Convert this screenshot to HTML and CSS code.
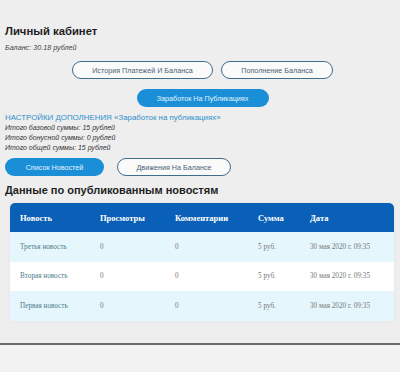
FILE: index.html
```html
<!DOCTYPE html>
<html lang="ru">
<head>
    <meta charset="UTF-8">
    <meta name="viewport" content="width=device-width, initial-scale=1.0">
    <title>Личный кабинет</title>
    <link rel="stylesheet" href="styles.css">
</head>
<body>
    <div class="container">
        <h1>Личный кабинет</h1>
        <p class="balance">Баланс: 30.18 рублей</p>

        <div class="btn-row center">
            <a class="btn outline w-history" href="#">История Платежей И Баланса</a>
            <a class="btn outline w-topup" href="#">Пополнение Баланса</a>
        </div>
        <div class="btn-row center second">
            <a class="btn filled w-earn" href="#">Заработок На Публикациях</a>
        </div>

        <div class="settings">
            <div class="settings-title">НАСТРОЙКИ ДОПОЛНЕНИЯ «Заработок на публикациях»</div>
            <div class="note">Итого базовой суммы: 15 рублей</div>
            <div class="note">Итого бонусной суммы: 0 рублей</div>
            <div class="note">Итого общей суммы: 15 рублей</div>
        </div>

        <div class="btn-row left">
            <a class="btn filled w-news" href="#">Список Новостей</a>
            <a class="btn outline w-moves" href="#">Движения На Балансе</a>
        </div>

        <h2>Данные по опубликованным новостям</h2>

        <table class="news-table">
            <thead>
                <tr>
                    <th class="c1">Новость</th>
                    <th class="c2">Просмотры</th>
                    <th class="c3">Комментарии</th>
                    <th class="c4">Сумма</th>
                    <th>Дата</th>
                </tr>
            </thead>
            <tbody>
                <tr>
                    <td class="title">Третья новость</td>
                    <td>0</td>
                    <td>0</td>
                    <td>5 руб.</td>
                    <td>30 мая 2020 г. 09:35</td>
                </tr>
                <tr>
                    <td class="title">Вторая новость</td>
                    <td>0</td>
                    <td>0</td>
                    <td>5 руб.</td>
                    <td>30 мая 2020 г. 09:35</td>
                </tr>
                <tr>
                    <td class="title">Первая новость</td>
                    <td>0</td>
                    <td>0</td>
                    <td>5 руб.</td>
                    <td>30 мая 2020 г. 09:35</td>
                </tr>
            </tbody>
        </table>
    </div>
    <div class="footer"></div>
</body>
</html>
```

FILE: styles.css
```css
body {
    font-family: "Liberation Sans", Arial, sans-serif;
    margin: 0;
    padding: 0;
    background-color: #eeeeee;
    color: #222;
}

.container {
    padding: 24px 0 0 5px;
}

h1 {
    font-size: 11.3px;
    font-weight: bold;
    margin: 0;
    line-height: 15px;
    color: #1e1e1e;
}

.balance {
    font-size: 7.2px;
    font-style: italic;
    color: #444;
    margin: 4px 0 0;
    line-height: 10px;
}

.btn-row {
    display: flex;
    gap: 8px;
}

.btn-row.center {
    justify-content: center;
    margin-top: 8px;
}

.btn-row.second {
    margin-top: 10px;
}

.btn-row.left {
    gap: 13px;
    margin-top: 5px;
}

.btn {
    display: flex;
    align-items: center;
    justify-content: center;
    box-sizing: border-box;
    height: 18px;
    border-radius: 9px;
    font-size: 7.2px;
    text-decoration: none;
}

.btn.outline {
    border: 1.5px solid #3f6d8c;
    background-color: #fafafa;
    color: #4a6278;
}

.btn.filled {
    background-color: #1a8fd8;
    color: #e4f3fc;
}

.w-history { width: 141px; }
.w-topup { width: 112px; }
.w-earn { width: 132px; }
.w-news { width: 99px; }
.w-moves { width: 114px; }

.settings {
    margin-top: 6px;
    font-size: 7px;
    line-height: 10px;
}

.settings-title {
    color: #2f8fcc;
    font-size: 7.9px;
}

.note {
    font-style: italic;
    color: #333;
}

h2 {
    font-size: 11px;
    font-weight: bold;
    margin: 7px 0 0;
    line-height: 14px;
    color: #1e1e1e;
}

.news-table {
    width: 384px;
    margin: 6px 0 0 5px;
    border-collapse: separate;
    border-spacing: 0;
    font-family: "Liberation Serif", "Times New Roman", serif;
    font-size: 7.2px;
    box-shadow: 0 0 4px rgba(0, 0, 0, 0.04);
}

.news-table th {
    background-color: #0a60b6;
    color: #fff;
    font-weight: bold;
    font-size: 8.5px;
    text-align: left;
    height: 29px;
    padding: 0 0 0 10px;
}

.news-table th:first-child {
    border-top-left-radius: 5px;
}

.news-table th:last-child {
    border-top-right-radius: 5px;
}

.news-table .c1 { width: 70px; }
.news-table .c2 { width: 65px; }
.news-table .c3 { width: 73px; }
.news-table .c4 { width: 42px; }

.news-table td {
    height: 29.5px;
    padding: 0 0 0 10px;
    color: #767676;
}

.news-table tbody tr:nth-child(odd) td {
    background-color: #e5f7fd;
}

.news-table tbody tr:nth-child(even) td {
    background-color: #ffffff;
}

.news-table td.title {
    color: #4d7b8a;
}

.footer {
    margin-top: 22px;
    border-top: 2px solid #6a6a6a;
    height: 28px;
    background-color: #f2f2f2;
}
```
